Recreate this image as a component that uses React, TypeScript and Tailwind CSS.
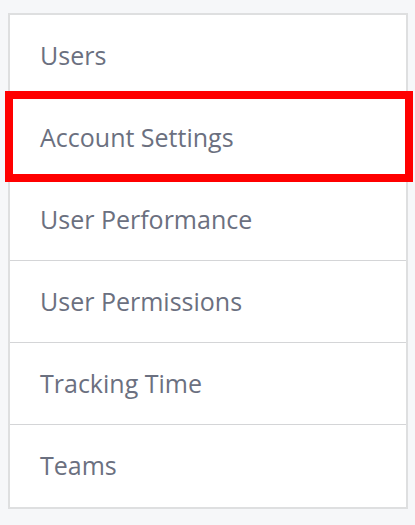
const items = [
  "Users",
  "Account Settings",
  "User Performance",
  "User Permissions",
  "Tracking Time",
  "Teams",
];

export default function App() {
  return (
    <div className="min-h-screen bg-[#f6f7f9] pt-[13px] pl-[8px]" style={{ fontFamily: '"Open Sans", sans-serif' }}>
      <div className="w-[400px] border-2 border-[#dedfe0] bg-white">
        {items.map((label, i) => (
          <div
            key={label}
            className={`relative flex h-[82px] items-center pl-[30px] text-[25px] text-[#6b7080] ${
              i < items.length - 1 ? "border-b border-[#d4d5d7]" : ""
            }`}
          >
            {label}
            {label === "Account Settings" && (
              <div className="pointer-events-none absolute -top-[6px] -bottom-[4px] -left-[5px] -right-[7px] border-8 border-[#ff0000]" />
            )}
          </div>
        ))}
      </div>
    </div>
  );
}
